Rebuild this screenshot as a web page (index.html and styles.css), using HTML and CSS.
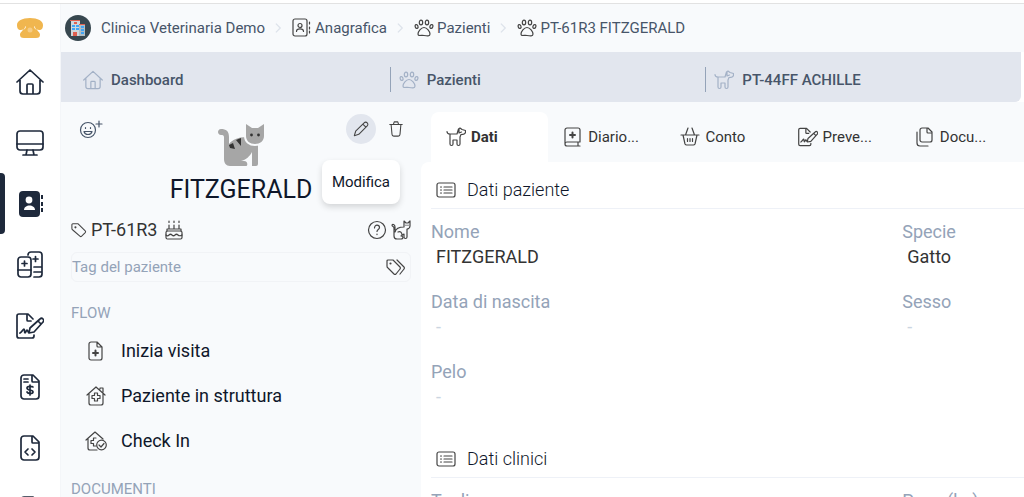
FILE: index.html
```html
<!DOCTYPE html>
<html lang="it">
<head>
  <meta charset="UTF-8" />
  <meta name="viewport" content="width=device-width, initial-scale=1.0"/>
  <title>PT-61R3 FITZGERALD</title>
  <link rel="stylesheet" href="styles.css">
</head>
<body>
  <!-- Icon sprite -->
  <svg class="sprite" aria-hidden="true">
    <symbol id="i-home" viewBox="0 0 28 28"><path d="M1 14 14 2l13 12M4 12v11a3 3 0 0 0 3 3h14a3 3 0 0 0 3-3V12M11 26v-9a1 1 0 0 1 1-1h4a1 1 0 0 1 1 1v9"/></symbol>
    <symbol id="i-monitor" viewBox="0 0 28 28"><rect x="1" y="2" width="26" height="19" rx="3"/><path d="M1 15h26M11 21l-1 5M17 21l1 5M7 26h14"/></symbol>
    <symbol id="i-sheets" viewBox="0 0 28 28"><path d="M12 4a3 3 0 0 1 3-3h8a3 3 0 0 1 3 3v19a3 3 0 0 1-3 3h-5M18 16h8M18 21h8M19.500 5.500v5M17 8h5"/><rect x="2" y="6" width="13" height="20" rx="3"/><path d="M2 19h13M8.500 10v5M6 12.500h5"/></symbol>
    <symbol id="i-sign" viewBox="0 0 28 28"><path d="M18 23v1a2 2 0 0 1-2 2H3a2 2 0 0 1-2-2V4a2 2 0 0 1 2-2h9l5 5M11 2v6a1 1 0 0 0 1 1h3M4 21c2-1 3-4 4-4s0 4 1 4 1-3 2-3 1 3 2 3M13 21l1-5L24 7a2 2 0 0 1 3 3L18 20zM22 9l3 3"/></symbol>
    <symbol id="i-invoice" viewBox="0 0 28 28"><path d="M8 2h9l6 6v15a3 3 0 0 1-3 3H8a3 3 0 0 1-3-3V5a3 3 0 0 1 3-3zM16 2v6a1 1 0 0 0 1 1h6M8 6h4M8 9h4M14 12v10M17 14c-1-1-6-1-6 1 0 3 6 1 6 4 0 2-5 2-6 0"/></symbol>
    <symbol id="i-code" viewBox="0 0 28 28"><path d="M8 2h9l6 6v15a3 3 0 0 1-3 3H8a3 3 0 0 1-3-3V5a3 3 0 0 1 3-3zM16 2v6a1 1 0 0 0 1 1h6M12 15l-3 3 3 3M16 15l3 3-3 3"/></symbol>
    <symbol id="i-contacts" viewBox="0 0 20 20"><rect x="1" y="1" width="14" height="17" rx="2"/><circle cx="8" cy="7.500" r="2"/><path d="M4.500 13.500c0-3.500 7-3.500 7 0M17.500 4v2M17.500 9v2M17.500 13v2"/></symbol>
    <symbol id="i-paw" viewBox="0 0 20 20"><ellipse cx="7" cy="4.500" rx="1.700" ry="2.400"/><ellipse cx="13" cy="4.500" rx="1.700" ry="2.400"/><ellipse cx="2.600" cy="8.500" rx="1.400" ry="2" transform="rotate(-20 2.600 8.500)"/><ellipse cx="17.400" cy="8.500" rx="1.400" ry="2" transform="rotate(20 17.400 8.500)"/><path d="M10 9.500c3 0 6 4 6 6.500 0 2.500-3 2-6 1.500s-6 1-6-1.500c0-2.500 3-6.500 6-6.500z"/></symbol>
    <symbol id="i-dog" viewBox="0 0 20 20"><path d="M1 4.500c0 1.500 1 2.500 3 2.500h7l1.500-5L14 1l2 1.500 3.500 1V5c0 2-2 2.500-4.500 2.500l-1 2.500v7c0 2-3 2-3 0v-4H7v4c0 2-3 2-3 0V7M13 2v4l2.500-1"/></symbol>
    <symbol id="i-chevron" viewBox="0 0 8 12"><path d="M1 1l5 5-5 5"/></symbol>
    <symbol id="i-smile" viewBox="0 0 24 20"><circle cx="9" cy="11" r="7.500"/><path d="M5 12.500c1 4 7 4 8 0zM6.500 8.500v1M11.500 8.500v1M20 2v6M17 5h6"/></symbol>
    <symbol id="i-pencil" viewBox="0 0 18 18"><path d="M1.500 16.500l1.500-5 9.500-9.500a2 2 0 0 1 3.500 3.500L6.500 15zM11 3.500l3.500 3.500"/></symbol>
    <symbol id="i-trash" viewBox="0 0 18 18"><path d="M2 4h14M3.500 4l1 11a2 2 0 0 0 2 2h5a2 2 0 0 0 2-2l1-11M6 4l1-3h4l1 3"/></symbol>
    <symbol id="i-tag" viewBox="0 0 18 18"><path d="M2 2h6l8 8a1.500 1.500 0 0 1 0 2l-4 4a1.500 1.500 0 0 1-2 0L2 9a2 2 0 0 1-1-2V3a1 1 0 0 1 1-1z"/><circle cx="5" cy="6" r=".6"/></symbol>
    <symbol id="i-tags" viewBox="0 0 20 18"><path d="M2 2h5l7 7a1.500 1.500 0 0 1 0 2l-4 5a1.500 1.500 0 0 1-2 0L2 10a2 2 0 0 1-1-2V3a1 1 0 0 1 1-1zM11 2l7 7a1.500 1.500 0 0 1 0 2l-4 5"/><circle cx="4.500" cy="5.500" r=".5"/></symbol>
    <symbol id="i-cake" viewBox="0 0 18 20"><rect x="1" y="11" width="16" height="8" rx="1.500"/><path d="M1 15c1 1 2 1 3 0s2-1 3 0 2 1 3 0 2-1 3 0 3 1 4 0M2 11V9h14v2M4 9V5M9 9V5M14 9V5M4 1v1.500M9 1v1.500M14 1v1.500"/></symbol>
    <symbol id="i-help" viewBox="0 0 20 20"><circle cx="10" cy="10" r="8.500"/><path d="M7.500 8c0-4 5-3.500 5-.5 0 2-2.500 2-2.500 4M10 14v.6"/></symbol>
    <symbol id="i-cat" viewBox="0 0 20 20"><path d="M13 7V1l2 2h2l2-2v5c0 2-2 3-3 3v8c0 2-3 2-3 0v-3l-3 2c2 0 3 3 0 3H6c-2 0-3-1-3-3V8c0-2-2-1-2-3 0-1 3-1 3 2v3M4 12c1-4 5-5 9-5M7 12c2-1 4 0 4 3M15 5v.3M17 5v.3"/></symbol>
    <symbol id="i-visit" viewBox="0 0 20 20"><path d="M5 1h6l5 5v11a2 2 0 0 1-2 2H5a2 2 0 0 1-2-2V3a2 2 0 0 1 2-2zM11 1v4a1 1 0 0 0 1 1h4"/><path class="thick" d="M9.500 9.500v5M7 12h5"/></symbol>
    <symbol id="i-clinic" viewBox="0 0 20 20"><path d="M1 9l9-8 9 8M3 7.500V17a2 2 0 0 0 2 2h10a2 2 0 0 0 2-2V7.500M14 3V2h3v4M8.500 7h3v2.500H14v3h-2.500V15h-3v-2.500H6v-3h2.500z"/></symbol>
    <symbol id="i-checkin" viewBox="0 0 22 20"><path d="M1 9l9-8 8 7M3 7.500V17a2 2 0 0 0 2 2h7M11 7H8.500v2.500H6v3h2.500V15H11"/><circle cx="16.500" cy="14" r="4.800"/><path d="M14 14l2 2 3-3.500"/></symbol>
    <symbol id="i-diary" viewBox="0 0 20 20"><path d="M17 15H4a2 2 0 0 0 0 4h13M2 17V3a2 2 0 0 1 2-2h11a2 2 0 0 1 2 2v12M15 15v4"/><path class="thick" d="M9.500 5.500v5M7 8h5"/></symbol>
    <symbol id="i-basket" viewBox="0 0 20 20"><path d="M1 8h18M3 8l2 9a2 2 0 0 0 2 1h6a2 2 0 0 0 2-1l2-9M5.500 8 8 1M14.500 8 12 1M7.500 11.500v3M10 11.500v3M12.500 11.500v3"/></symbol>
    <symbol id="i-docs" viewBox="0 0 20 20"><path d="M7 1h6l4 4v8a2 2 0 0 1-2 2H7a2 2 0 0 1-2-2V3a2 2 0 0 1 2-2zM12 1v4a1 1 0 0 0 1 1h4M2 5v11a3 3 0 0 0 3 3h8"/></symbol>
    <symbol id="i-list" viewBox="0 0 20 16"><rect x="1" y="1" width="18" height="14" rx="2"/><path d="M4.500 5h1M4.500 8h1M4.500 11h1M8 5h8M8 8h8M8 11h8"/></symbol>
  </svg>

  <div class="app">
    <nav class="sidebar">
      <a href="#" class="brand" aria-label="Telefono">
        <svg width="26" height="20" viewBox="0 0 26 20"><path fill="#f0b64f" d="M13 0C5 0 0 3 0 7c0 3 1 5 4 5l2-.5c0 1.500-3 2.500-3 5C3 19 4 20 7 20h12c3 0 4-1 4-3.500 0-2.500-3-3.500-3-5l2 .5c3 0 4-2 4-5 0-4-5-7-13-7z"/><path fill="#fff" d="M8 8.500c0 1.500-.5 2.500-2 3 1.500.5 2.500-1 3-3zM18 8.500c0 1.500.5 2.500 2 3-1.500.5-2.500-1-3-3z"/><circle cx="13" cy="12" r="2.500" fill="#f6cd86"/></svg>
      </a>
      <a href="#" class="side-link" aria-label="Dashboard"><svg class="icon icon-lg"><use href="#i-home"/></svg></a>
      <a href="#" class="side-link" aria-label="Monitor"><svg class="icon icon-lg"><use href="#i-monitor"/></svg></a>
      <a href="#" class="side-link active" aria-label="Anagrafica">
        <svg class="icon-lg" viewBox="0 0 28 28"><rect x="3" y="1" width="21" height="26" rx="4" fill="#1e293b"/><circle cx="13" cy="10" r="3.400" fill="#fff"/><path d="M8 20c0-6 11-6 11 0z" fill="#fff"/><path d="M26 5v4M26 12v4M26 18v4" stroke="#1e293b" stroke-width="2"/></svg>
      </a>
      <a href="#" class="side-link" aria-label="Cartelle"><svg class="icon icon-lg"><use href="#i-sheets"/></svg></a>
      <a href="#" class="side-link" aria-label="Preventivi"><svg class="icon icon-lg"><use href="#i-sign"/></svg></a>
      <a href="#" class="side-link" aria-label="Fatture"><svg class="icon icon-lg"><use href="#i-invoice"/></svg></a>
      <a href="#" class="side-link" aria-label="Codici"><svg class="icon icon-lg"><use href="#i-code"/></svg></a>
      <a href="#" class="side-link" aria-label="Documenti"><svg class="icon icon-lg"><use href="#i-invoice"/></svg></a>
    </nav>

    <div class="main">
      <header class="breadcrumb">
        <svg class="avatar" viewBox="0 0 26 26"><circle cx="13" cy="13" r="13" fill="#37474f"/><rect x="6" y="6" width="9" height="15" fill="#cfd8dc"/><rect x="14" y="10" width="6" height="11" fill="#b0bec5"/><path fill="#e06050" d="M5 5h10v1H5zM14 9h6v1h-6zM8 17h4v4H8zM9 7h3v2H9z"/><path fill="#42a5f5" d="M7 10h3v2H7zM11 10h3v2h-3zM7 13h3v2H7zM11 13h3v2h-3zM16 11h3v2h-3zM16 14h3v2h-3zM16 17h3v2h-3z"/></svg>
        <a href="#" class="crumb">Clinica Veterinaria Demo</a>
        <svg class="chevron"><use href="#i-chevron"/></svg>
        <a href="#" class="crumb"><svg class="icon"><use href="#i-contacts"/></svg>Anagrafica</a>
        <svg class="chevron"><use href="#i-chevron"/></svg>
        <a href="#" class="crumb"><svg class="icon"><use href="#i-paw"/></svg>Pazienti</a>
        <svg class="chevron"><use href="#i-chevron"/></svg>
        <a href="#" class="crumb"><svg class="icon"><use href="#i-paw"/></svg>PT-61R3 FITZGERALD</a>
      </header>

      <div class="window-bar">
        <div class="window-tabs">
          <a href="#" class="window-tab"><svg class="icon icon-home"><use href="#i-home"/></svg>Dashboard</a>
          <a href="#" class="window-tab"><svg class="icon"><use href="#i-paw"/></svg>Pazienti</a>
          <a href="#" class="window-tab"><svg class="icon"><use href="#i-dog"/></svg>PT-44FF ACHILLE</a>
        </div>
      </div>

      <div class="content">
        <aside class="patient">
          <div class="patient-top">
            <button class="icon-btn" aria-label="Aggiungi reazione"><svg class="icon icon-smile"><use href="#i-smile"/></svg></button>
            <div class="patient-actions">
              <button class="icon-btn hover" aria-label="Modifica"><svg class="icon icon-sm"><use href="#i-pencil"/></svg></button>
              <button class="icon-btn" aria-label="Elimina"><svg class="icon icon-sm"><use href="#i-trash"/></svg></button>
              <div class="tooltip">Modifica</div>
            </div>
          </div>
          <svg class="portrait" viewBox="0 0 46 42">
            <path fill="#a6a6a6" d="M3 5c5 0 8 2 8 8v7c3-4 9-7 17-7l12 8v19a2 2 0 0 1-2 2h-4V28c-2 4-6 8-11 9h3c4 0 4 5 2 5H12c-4 0-6-3-6-7V14c0-3-1-3-3-3-4 0-4-6 0-6z"/>
            <path fill="#a6a6a6" stroke="#f8fafc" stroke-width="4" paint-order="stroke" d="M28 0l6 4h6l6-4v12c0 5-4 8-9 8s-9-3-9-8z"/>
            <path fill="#333" d="M11 21l6 4-2-6zM18 16l5 6V14zM11 21l6 4-5-1z"/>
            <circle cx="33.500" cy="11" r="1.400" fill="#333"/><circle cx="40.500" cy="11" r="1.400" fill="#333"/>
          </svg>
          <h1>FITZGERALD</h1>

          <div class="patient-code">
            <svg class="icon icon-sm"><use href="#i-tag"/></svg>
            <span>PT-61R3</span>
            <svg class="icon icon-cake"><use href="#i-cake"/></svg>
            <span class="spacer"></span>
            <svg class="icon"><use href="#i-help"/></svg>
            <svg class="icon"><use href="#i-cat"/></svg>
          </div>

          <div class="tag-box">
            <input type="text" placeholder="Tag del paziente" aria-label="Tag del paziente">
            <svg class="icon icon-tags"><use href="#i-tags"/></svg>
          </div>

          <h2>FLOW</h2>
          <a href="#" class="flow-link"><svg class="icon"><use href="#i-visit"/></svg>Inizia visita</a>
          <a href="#" class="flow-link"><svg class="icon"><use href="#i-clinic"/></svg>Paziente in struttura</a>
          <a href="#" class="flow-link"><svg class="icon icon-checkin"><use href="#i-checkin"/></svg>Check In</a>
          <h2>DOCUMENTI</h2>
        </aside>

        <main class="record">
          <div class="record-tabs">
            <button class="record-tab active"><svg class="icon"><use href="#i-dog"/></svg>Dati</button>
            <button class="record-tab"><svg class="icon"><use href="#i-diary"/></svg>Diario...</button>
            <button class="record-tab"><svg class="icon"><use href="#i-basket"/></svg>Conto</button>
            <button class="record-tab"><svg class="icon icon-sign"><use href="#i-sign"/></svg>Preve...</button>
            <button class="record-tab"><svg class="icon"><use href="#i-docs"/></svg>Docu...</button>
          </div>

          <div class="panel">
            <section>
              <h3><svg class="icon"><use href="#i-list"/></svg>Dati paziente</h3>
              <dl class="fields">
                <div><dt>Nome</dt><dd>FITZGERALD</dd></div>
                <div><dt>Specie</dt><dd>Gatto</dd></div>
                <div><dt>Data di nascita</dt><dd class="empty">-</dd></div>
                <div><dt>Sesso</dt><dd class="empty">-</dd></div>
                <div><dt>Pelo</dt><dd class="empty">-</dd></div>
              </dl>
            </section>
            <section>
              <h3><svg class="icon"><use href="#i-list"/></svg>Dati clinici</h3>
              <dl class="fields">
                <div><dt>Taglia</dt><dd class="empty">-</dd></div>
                <div><dt>Peso (kg)</dt><dd class="empty">-</dd></div>
              </dl>
            </section>
          </div>
        </main>
      </div>
    </div>
  </div>
</body>
</html>
```
FILE: styles.css
```css
* {
  box-sizing: border-box;
}

body {
  margin: 0;
  padding-top: 3px;
  height: 100vh;
  overflow: hidden;
  font-family: Roboto, "Liberation Sans", sans-serif;
  font-size: 15px;
  color: #333;
  background: #fff;
}

a {
  color: inherit;
  text-decoration: none;
}

button {
  font: inherit;
  color: inherit;
  border: none;
  background: none;
  padding: 0;
  cursor: pointer;
}

h1, h2, h3, dl, dd {
  margin: 0;
  font-weight: 400;
}

.sprite {
  position: absolute;
  width: 0;
  height: 0;
}

.icon {
  width: 20px;
  height: 20px;
  flex: none;
  fill: none;
  stroke: #444;
  stroke-width: 1.2;
  stroke-linecap: round;
  stroke-linejoin: round;
}

.icon-sm {
  width: 16px;
  height: 16px;
}

.icon-lg {
  width: 28px;
  height: 28px;
}

.thick {
  stroke-width: 2;
}

.app {
  display: flex;
  height: 100%;
  overflow: hidden;
  border-top: 1px solid #e2e2e2;
}

/* Sidebar */
.sidebar {
  width: 61px;
  flex: none;
  border-right: 1px solid #f4f6f9;
}

.brand {
  display: flex;
  justify-content: center;
  align-items: center;
  height: 47px;
}

.side-link {
  position: relative;
  display: flex;
  justify-content: center;
  align-items: center;
  height: 61px;
}

.side-link .icon {
  stroke: #1e293b;
  stroke-width: 1.7;
}

.side-link.active::before {
  content: "";
  position: absolute;
  top: 0;
  left: 0;
  width: 5px;
  height: 100%;
  background: #1e293b;
  border-radius: 0 4px 4px 0;
}

/* Header */
.main {
  flex: 1;
  min-width: 0;
  display: flex;
  flex-direction: column;
  background: #f8fafc;
}

.breadcrumb {
  display: flex;
  align-items: center;
  gap: 10px;
  height: 48px;
  flex: none;
  padding-left: 4px;
  color: #475569;
}

.avatar {
  width: 26px;
  height: 26px;
  flex: none;
}

.crumb {
  display: flex;
  align-items: center;
  gap: 3px;
  white-space: nowrap;
}

.chevron {
  width: 7px;
  height: 12px;
  flex: none;
  fill: none;
  stroke: #dde3eb;
  stroke-width: 1.5;
}

.window-bar {
  flex: none;
  background: #fff;
  padding-right: 3px;
}

.window-tabs {
  display: flex;
  align-items: center;
  height: 50px;
  padding: 5px 0 0 13px;
  background: #e2e6ee;
  border-radius: 0 0 6px 0;
}

.window-tab {
  flex: 1;
  display: flex;
  align-items: center;
  gap: 8px;
  height: 25px;
  padding-left: 8px;
  border-left: 1px solid #94a3b8;
  font-weight: 500;
  color: #475569;
}

.window-tab:first-child {
  border-left-color: transparent;
}

.window-tab .icon {
  stroke: #a3b1c6;
}

/* Patient card */
.content {
  flex: 1;
  min-height: 0;
  display: flex;
}

.patient {
  width: 360px;
  flex: none;
  padding: 12px 10px 0;
  overflow: hidden;
}

.patient-top {
  display: flex;
  justify-content: space-between;
  height: 30px;
  padding-left: 5px;
}

.patient-actions {
  position: relative;
  display: flex;
  gap: 5px;
}

.icon-btn {
  display: flex;
  justify-content: center;
  align-items: center;
  width: 30px;
  height: 30px;
  border-radius: 50%;
}

.icon-btn.hover {
  background: #e2e6ee;
}

.icon-smile {
  width: 24px;
  stroke: #475569;
}

.tooltip {
  position: absolute;
  top: 46px;
  right: 11px;
  padding: 10px;
  line-height: 24px;
  color: #0f172a;
  background: #fff;
  border-radius: 8px;
  box-shadow: 0 3px 6px rgba(0, 0, 0, 0.15);
}

.portrait {
  display: block;
  width: 46px;
  height: 42px;
  margin: -20px auto 0;
}

h1 {
  margin-top: 8px;
  font-size: 25px;
  line-height: 32px;
  text-align: center;
  color: #0f172a;
}

.patient-code {
  display: flex;
  align-items: center;
  gap: 4px;
  margin-top: 12px;
  font-size: 18px;
  line-height: 24px;
}

.icon-cake {
  width: 18px;
  margin-left: 4px;
}

.spacer {
  flex: 1;
}

.tag-box {
  display: flex;
  align-items: center;
  height: 30px;
  margin-top: 10px;
  padding-right: 4px;
  border: 1px solid #f1f3f6;
  border-radius: 6px;
}

.tag-box input {
  flex: 1;
  min-width: 0;
  padding: 0;
  border: none;
  outline: none;
  background: none;
  font: inherit;
}

.tag-box input::placeholder {
  color: #94a3b8;
}

h2 {
  margin: 21px 0 5px;
  font-size: 15px;
  line-height: 20px;
  color: #94a3b8;
}

.flow-link {
  display: flex;
  align-items: center;
  gap: 15px;
  height: 45px;
  padding-left: 15px;
  font-size: 18px;
  color: #0f172a;
}

.icon-checkin {
  width: 22px;
  margin: 0 -1px;
}

.flow-link + h2 {
  margin-top: 16px;
}

/* Record */
.record {
  flex: 1;
  min-width: 0;
  overflow: hidden;
}

.record-tabs {
  display: flex;
  padding: 10px 7px 0 10px;
}

.record-tab {
  flex: 1;
  display: flex;
  align-items: center;
  gap: 5px;
  height: 50px;
  padding-left: 15px;
  white-space: nowrap;
}

.record-tab.active {
  font-weight: 700;
  background: #fff;
  border-radius: 8px 8px 0 0;
}

.icon-sign,
.icon-home {
  stroke-width: 1.7;
}

.panel {
  padding-left: 10px;
  background: #fff;
  border-radius: 8px 0 0 0;
}

h3 {
  display: flex;
  align-items: center;
  gap: 11px;
  height: 47px;
  padding: 9px 0 0 5px;
  border-bottom: 1px solid #eef1f7;
  font-size: 18px;
  font-weight: 300;
  color: #0f172a;
}

.fields {
  display: grid;
  grid-template-columns: 4fr 1fr;
  row-gap: 20px;
  padding: 10px 4px 22px 0;
  font-size: 18px;
  line-height: 25px;
}

.fields dt {
  color: #94a3b8;
}

.fields dd {
  padding-left: 5px;
}

.fields .empty {
  color: #cbd5e1;
}
```
